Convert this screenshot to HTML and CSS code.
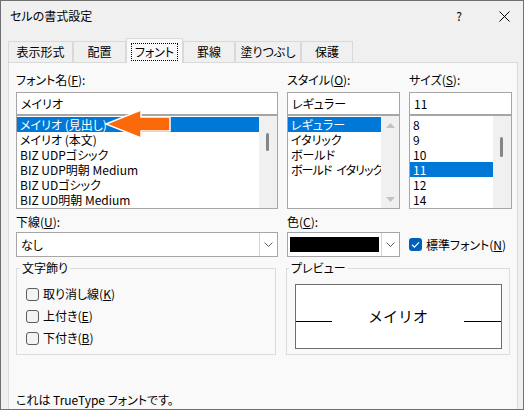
FILE: index.html
```html
<!DOCTYPE html>
<html lang="ja">
<head>
<meta charset="utf-8">
<title>セルの書式設定</title>
<link rel="stylesheet" href="styles.css">
</head>
<body>
<div class="window">
  <div class="titlebar">
    <span class="title">セルの書式設定</span>
    <span class="help">?</span>
    <span class="close"><svg width="11" height="11" viewBox="0 0 11 11"><path d="M0.5 0.5 L10.5 10.5 M10.5 0.5 L0.5 10.5" stroke="#000" stroke-width="1" fill="none"/></svg></span>
  </div>
  <div class="tabs">
    <div class="tab tab-wide">表示形式</div>
    <div class="tab tab-mid">配置</div>
    <div class="tab active"><span class="focus">フォント</span></div>
    <div class="tab">罫線</div>
    <div class="tab tab-wider">塗りつぶし</div>
    <div class="tab">保護</div>
  </div>
  <div class="panel">
    <div class="grid">
      <div class="col">
        <div class="label">フォント名(<u>F</u>):</div>
        <div class="input">メイリオ</div>
        <div class="list">
          <div class="items">
            <div class="item sel">メイリオ (見出し)</div>
            <div class="item">メイリオ (本文)</div>
            <div class="item">BIZ UDPゴシック</div>
            <div class="item">BIZ UDP明朝 Medium</div>
            <div class="item">BIZ UDゴシック</div>
            <div class="item">BIZ UD明朝 Medium</div>
          </div>
          <div class="scroll"><div class="thumb thumb-font"></div></div>
        </div>
      </div>
      <div class="col">
        <div class="label">スタイル(<u>O</u>):</div>
        <div class="input">レギュラー</div>
        <div class="list">
          <div class="items">
            <div class="item sel">レギュラー</div>
            <div class="item">イタリック</div>
            <div class="item">ボールド</div>
            <div class="item tight">ボールド イタリック</div>
          </div>
          <div class="scroll arrows">
            <svg width="9" height="5" viewBox="0 0 9 5"><path d="M0 5 L4.5 0 L9 5 Z" fill="#c2c2c2"/></svg>
            <svg width="9" height="5" viewBox="0 0 9 5"><path d="M0 0 L4.5 5 L9 0 Z" fill="#c2c2c2"/></svg>
          </div>
        </div>
      </div>
      <div class="col">
        <div class="label">サイズ(<u>S</u>):</div>
        <div class="input">11</div>
        <div class="list">
          <div class="items">
            <div class="item">8</div>
            <div class="item">9</div>
            <div class="item">10</div>
            <div class="item sel">11</div>
            <div class="item">12</div>
            <div class="item">14</div>
          </div>
          <div class="scroll"><div class="thumb thumb-size"></div></div>
        </div>
      </div>

      <div class="col row2">
        <div class="label">下線(<u>U</u>):</div>
        <div class="select">
          <span class="val">なし</span>
          <span class="btn"><svg width="9" height="5" viewBox="0 0 9 5"><path d="M0.5 0.5 L4.5 4.5 L8.5 0.5" stroke="#606060" fill="none"/></svg></span>
        </div>
      </div>
      <div class="col row2">
        <div class="label">色(<u>C</u>):</div>
        <div class="select">
          <span class="swatch"></span>
          <span class="btn"><svg width="9" height="5" viewBox="0 0 9 5"><path d="M0.5 0.5 L4.5 4.5 L8.5 0.5" stroke="#606060" fill="none"/></svg></span>
        </div>
      </div>
      <div class="col row2 checkcol">
        <label class="check"><span class="cb checked"><svg width="13" height="13" viewBox="0 0 13 13"><path d="M3 6.8 L5.4 9.1 L10 4.3" stroke="#fff" stroke-width="1.2" fill="none"/></svg></span>標準フォント(<u>N</u>)</label>
      </div>
    </div>

    <div class="groups">
      <fieldset class="group deco">
        <legend>文字飾り</legend>
        <label class="check row"><span class="cb"></span>取り消し線(<u>K</u>)</label>
        <label class="check row"><span class="cb"></span>上付き(<u>E</u>)</label>
        <label class="check row"><span class="cb"></span>下付き(<u>B</u>)</label>
      </fieldset>
      <fieldset class="group preview">
        <legend>プレビュー</legend>
        <div class="pbox">
          <span class="pline"></span>
          <span class="ptext">メイリオ</span>
          <span class="pline pline-r"></span>
        </div>
      </fieldset>
    </div>

    <div class="note">これは TrueType フォントです。</div>
  </div>

  <svg class="arrow" width="70" height="34" viewBox="0 0 70 34">
    <path d="M2 16 L37 2 L37 9 L66 9 L66 23 L37 23 L37 30 Z" fill="#fa6a0a" stroke="#fff" stroke-width="1.5" stroke-linejoin="miter"/>
  </svg>
</div>
</body>
</html>
```

FILE: styles.css
```css
body {
  margin: 0;
}

.window {
  position: relative;
  width: 524px;
  height: 410px;
  box-sizing: border-box;
  border: 1px solid #707070;
  background: #f0f0f0;
  overflow: hidden;
  font-family: "Noto Sans CJK JP", sans-serif;
  font-size: 12px;
  color: #000;
  font-feature-settings: "palt" 1;
}

u {
  text-decoration-thickness: 1px;
  text-underline-offset: 1px;
}

.titlebar {
  height: 30px;
  display: flex;
  align-items: center;
  padding-left: 9px;
}

.title {
  flex: 1;
  line-height: 14px;
}

.help {
  width: 30px;
  text-align: center;
  line-height: 14px;
}

.close {
  width: 38px;
  margin-left: 11px;
  display: flex;
  justify-content: center;
}

.tabs {
  display: flex;
  align-items: flex-end;
  height: 24px;
  margin-top: 7px;
  padding-left: 7px;
  position: relative;
  z-index: 1;
}

.tab {
  width: 52px;
  height: 21px;
  box-sizing: border-box;
  border: 1px solid #d9d9d9;
  border-bottom: none;
  background: #f0f0f0;
  display: flex;
  align-items: center;
  justify-content: center;
  line-height: 14px;
  white-space: nowrap;
  flex: none;
}

.tab-wide {
  width: 65px;
}

.tab-mid {
  width: 53px;
}

.tab-wider {
  width: 66px;
}

.tab.active {
  width: 57px;
  height: 25px;
  margin-bottom: -1px;
  padding-top: 1px;
  background: #f9f9f9;
}

.focus {
  border: 1px dotted #000;
  padding: 1px 3px;
}

.panel {
  height: 360px;
  margin: 0 5px 0 7px;
  border: 1px solid #dadada;
  background: #f9f9f9;
  padding: 10px 5px 0 7px;
}

.grid {
  display: grid;
  grid-template-columns: 262px 113px 103px;
  column-gap: 9px;
}

.label {
  height: 14px;
  line-height: 14px;
  margin-bottom: 5px;
  white-space: nowrap;
}

.input {
  height: 23px;
  box-sizing: border-box;
  border: 1px solid #a6a6a6;
  background: #fff;
  padding-left: 4px;
  line-height: 21px;
}

.list {
  height: 94px;
  box-sizing: border-box;
  border: 1px solid #a6a6a6;
  background: #fff;
  display: flex;
  overflow: hidden;
}

.items {
  flex: 1;
  padding-top: 1px;
  min-width: 0;
}

.item {
  height: 15px;
  line-height: 15px;
  padding-left: 3px;
  white-space: nowrap;
}

.item.tight {
  letter-spacing: -0.9px;
  word-spacing: 3px;
}

.item.sel {
  background: #0078d7;
  color: #fff;
}

.scroll {
  width: 18px;
  background: #f0f0f0;
  position: relative;
  flex: none;
}

.thumb {
  position: absolute;
  left: 7px;
  width: 3px;
  border-radius: 1.5px;
  background: #858585;
}

.thumb-font {
  top: 17px;
  height: 18px;
}

.thumb-size {
  top: 21px;
  height: 20px;
}

.scroll.arrows {
  display: flex;
  flex-direction: column;
  justify-content: space-between;
  align-items: center;
  padding: 7px 0 6px;
  box-sizing: border-box;
}

.row2 {
  margin-top: 6px;
}

.row2 .label {
  margin-bottom: 3px;
}

.select {
  height: 25px;
  box-sizing: border-box;
  border: 1px solid #a6a6a6;
  background: #fff;
  display: flex;
  align-items: stretch;
}

.select .val {
  flex: 1;
  padding-left: 4px;
  line-height: 23px;
}

.select .btn {
  width: 17px;
  flex: none;
  margin-left: auto;
  border-left: 1px solid #d4d4d4;
  display: flex;
  align-items: center;
  justify-content: center;
}

.swatch {
  width: 89px;
  height: 15px;
  margin: 4px 0 0 2px;
  background: #000;
}

.checkcol {
  display: flex;
  align-items: flex-end;
}

.check {
  display: flex;
  align-items: center;
  line-height: 14px;
  white-space: nowrap;
}

.checkcol .check {
  height: 25px;
}

.cb {
  width: 13px;
  height: 13px;
  box-sizing: border-box;
  border: 1px solid #5c5c5c;
  border-radius: 3px;
  background: #f3f3f3;
  margin-right: 4px;
  flex: none;
  display: flex;
}

.cb.checked {
  border: none;
  background: #005fb8;
}

.groups {
  display: grid;
  grid-template-columns: 260px 224px;
  column-gap: 10px;
  margin-top: 4px;
}

.group {
  margin: 0;
  border: 1px solid #dcdcdc;
  min-width: 0;
}

.group legend {
  padding: 0 2px;
  margin-left: -6px;
  line-height: 14px;
}

.deco {
  padding: 8px 9px 4px;
}

.deco .row {
  height: 22px;
}

.preview {
  padding: 9px 7px 5px 8px;
}

.pbox {
  height: 65px;
  box-sizing: border-box;
  border: 1px solid #6e6e6e;
  background: #fff;
  display: flex;
  align-items: flex-start;
}

.pline {
  width: 36px;
  height: 1px;
  margin-top: 36px;
  background: #000;
  flex: none;
}

.pline-r {
  width: 37px;
}

.ptext {
  flex: 1;
  text-align: center;
  font-size: 15px;
  line-height: 20px;
  margin-top: 21px;
  font-feature-settings: normal;
}

.note {
  margin-top: 38px;
  line-height: 14px;
}

.arrow {
  position: absolute;
  left: 103px;
  top: 107px;
}
```
